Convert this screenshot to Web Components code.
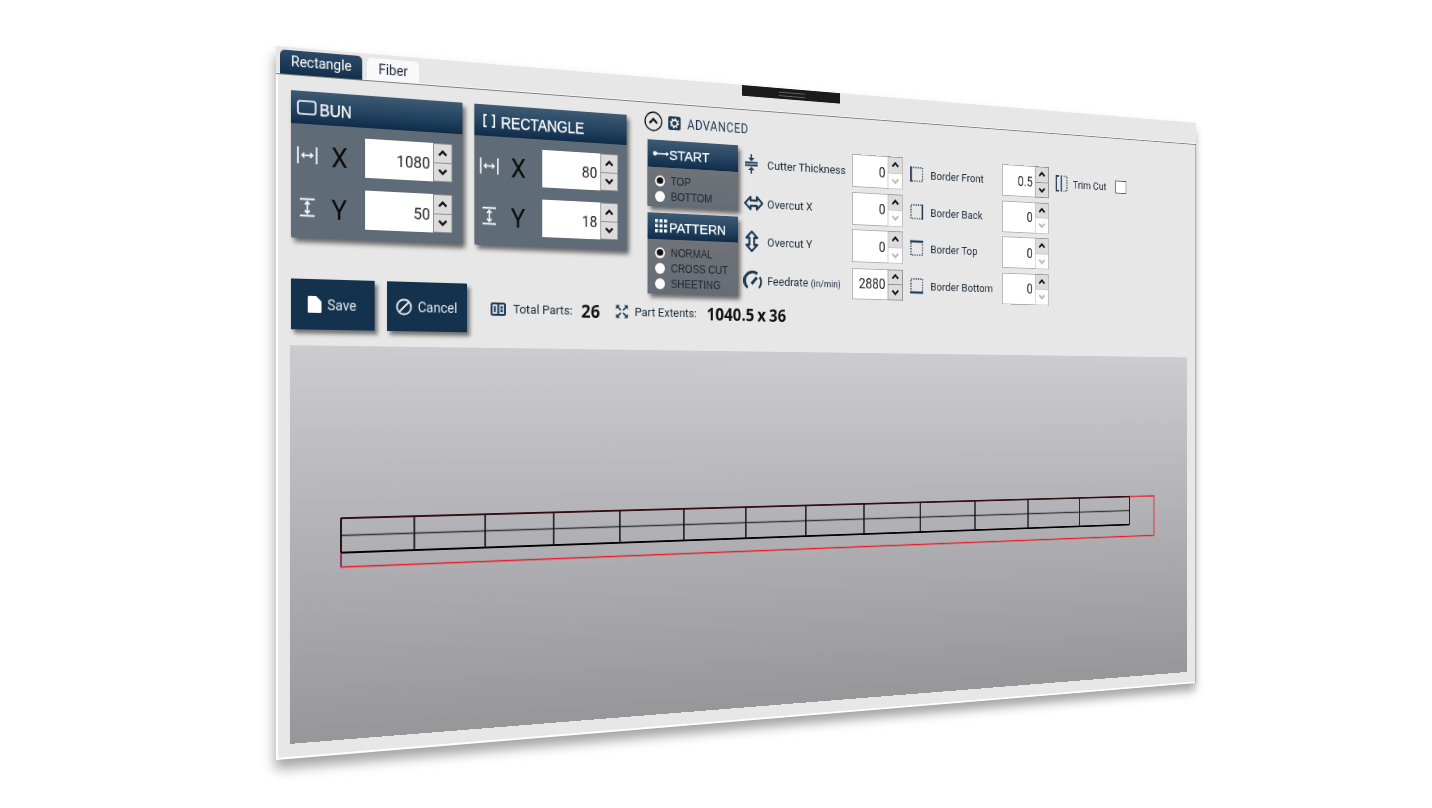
<!DOCTYPE html>
<html>
<head>
<meta charset="utf-8">
<title>Rectangle</title>
<style>
  html, body { margin: 0; height: 100%; background: #fff; overflow: hidden; }
</style>
</head>
<body>
<cut-window>
  <cut-tabs slot="tabs">
    <cut-tab active>Rectangle</cut-tab>
    <cut-tab>Fiber</cut-tab>
  </cut-tabs>

  <div slot="setup" style="display:flex">
    <cut-panel title="BUN" icon="bun" pad="6" gap="3" style="width:179.5px;height:148px;margin-right:13px">
      <dim-row icon="width" letter="X" value="1080" inw="72"></dim-row>
      <dim-row icon="height" letter="Y" value="50" inw="72"></dim-row>
    </cut-panel>
    <cut-panel title="RECTANGLE" icon="brackets" pad="9" gap="6" style="width:174.5px;height:148px">
      <dim-row icon="width" letter="X" value="80" inw="67"></dim-row>
      <dim-row icon="height" letter="Y" value="18" inw="67"></dim-row>
    </cut-panel>
  </div>

  <div slot="advanced">
    <adv-head>ADVANCED</adv-head>
    <div style="display:flex;gap:9px;margin-top:9px">
      <div style="display:flex;flex-direction:column;gap:7px;width:111px">
        <cut-panel title="START" icon="start" head="30" pad="6" gap="0" tight style="height:73px">
          <radio-row checked>TOP</radio-row>
          <radio-row>BOTTOM</radio-row>
        </cut-panel>
        <cut-panel title="PATTERN" icon="dots" head="29" pad="9" gap="2" tight style="height:89px">
          <radio-row checked>NORMAL</radio-row>
          <radio-row>CROSS CUT</radio-row>
          <radio-row>SHEETING</radio-row>
        </cut-panel>
      </div>
      <form-grid>
        <form-row icon="cutter" value="0" off>Cutter Thickness</form-row>
        <form-row icon="front" value="0.5" second>Border Front</form-row>
        <trim-cut>Trim Cut</trim-cut>

        <form-row icon="overx" value="0" off>Overcut X</form-row>
        <form-row icon="back" value="0" off second>Border Back</form-row>
        <span></span>

        <form-row icon="overy" value="0" off>Overcut Y</form-row>
        <form-row icon="top" value="0" off second>Border Top</form-row>
        <span></span>

        <form-row icon="gauge" value="2880" short>Feedrate <small>(in/min)</small></form-row>
        <form-row icon="bottom" value="0" off second>Border Bottom</form-row>
        <span></span>
      </form-grid>
    </div>
  </div>

  <div slot="actions" style="display:flex;align-items:flex-start">
    <cut-button icon="save" style="width:86px;margin-right:13px">Save</cut-button>
    <cut-button icon="cancel" style="width:86px;margin-right:26px">Cancel</cut-button>
    <cut-stat icon="parts" value="26" gap="10" style="margin-right:18px">Total Parts:</cut-stat>
    <cut-stat icon="expand" value="1040.5 x 36" gap="12">Part Extents:</cut-stat>
  </div>

  <cut-preview slot="preview"></cut-preview>
</cut-window>

<script>
const NAVY = "#1d3954";
const ICONS = {
  bun: `<svg viewBox="0 0 20 15" width="20" height="15"><rect x="1" y="1" width="18" height="13" rx="2.5" fill="none" stroke="#fff" stroke-width="1.6"/></svg>`,
  brackets: `<svg viewBox="0 0 16 16" width="15" height="16"><path d="M5 1.500H2v13h3M11 1.500h3v13h-3" fill="none" stroke="#fff" stroke-width="1.800"/></svg>`,
  width: `<svg viewBox="0 0 21 17" width="21" height="17" fill="none" stroke="#fff"><path d="M1 0v17M20 0v17" stroke-width="1.600"/><path d="M5 8.500h11M7.500 6L5 8.500 7.500 11M13.500 6L16 8.500 13.500 11" stroke-width="1.300"/></svg>`,
  height: `<svg viewBox="0 0 20 24" width="17" height="20" fill="none" stroke="#fff"><path d="M1 2h18M1 22h18" stroke-width="2"/><path d="M10 5v14M7 8.500L10 5l3 3.500M7 15.500l3 3.500 3-3.500" stroke-width="1.800"/></svg>`,
  start: `<svg viewBox="0 0 20 10" width="20" height="10"><circle cx="3" cy="5" r="2.400" fill="#fff"/><path d="M4 5h15M16.500 3.200L19 5l-2.500 1.800" fill="none" stroke="#fff" stroke-width="1.300"/></svg>`,
  dots: `<svg viewBox="0 0 15 15" width="15" height="15" fill="#fff"><path d="M0 0h3.500v3.500H0zM5.500 0H9v3.500H5.500zM11 0h3.500v3.500H11zM0 5.500h3.500V9H0zM5.500 5.500H9V9H5.500zM11 5.500h3.500V9H11zM0 11h3.500v3.500H0zM5.500 11H9v3.500H5.500zM11 11h3.500v3.500H11z"/></svg>`,
  cutter: `<svg viewBox="0 0 20 24" width="20" height="24" fill="none" stroke="${NAVY}" stroke-width="1.800"><path d="M2 10.500h16M2 13.500h16M10 1v6M10 23v-6"/><path d="M6 5l4 4 4-4zM6 19l4-4 4 4z" fill="${NAVY}" stroke="none"/></svg>`,
  overx: `<svg viewBox="0 0 26 20" width="26" height="22"><path d="M9 3L2 10l7 7v-4h8v4l7-7-7-7v4H9z" fill="none" stroke="${NAVY}" stroke-width="2.400" stroke-linejoin="round"/></svg>`,
  overy: `<svg viewBox="0 0 20 26" width="21" height="26"><path d="M3 9l7-7 7 7h-4v8h4l-7 7-7-7h4V9z" fill="none" stroke="${NAVY}" stroke-width="2.400" stroke-linejoin="round"/></svg>`,
  gauge: `<svg viewBox="0 0 22 20" width="25" height="22" fill="none" stroke="${NAVY}"><path d="M4.500 17.500A9 9 0 0 1 15.500 3.200" stroke-width="3"/><path d="M18.400 6.500A9 9 0 0 1 17.500 17.500" stroke-width="2.200"/><path d="M9 13.500L15 7" stroke-width="3"/></svg>`,
  front: side("M1 0v18"),
  back: side("M17 0v18"),
  top: side("M0 1h18"),
  bottom: side("M0 17h18"),
  trim: `<svg viewBox="0 0 20 22" width="20" height="22" fill="none" stroke="${NAVY}"><path d="M6 2H2v18h4" stroke-width="1.800"/><path d="M9.500 1v20" stroke-width="1.800"/><path d="M13 2h5v18h-5" stroke-width="1.500" stroke-dasharray="1.500 1.500"/></svg>`,
  save: `<svg viewBox="0 0 14 17" width="14" height="17"><path d="M1 0h7.500L14 5.500V16a1 1 0 0 1-1 1H1a1 1 0 0 1-1-1V1a1 1 0 0 1 1-1z" fill="#fff"/></svg>`,
  cancel: `<svg viewBox="0 0 18 18" width="18" height="18" fill="none" stroke="#e4e8ec" stroke-width="1.800"><circle cx="9" cy="9" r="7.500"/><path d="M4 14L14 4"/></svg>`,
  parts: `<svg viewBox="0 0 17 14" width="17" height="14"><rect width="17" height="14" rx="2.500" fill="${NAVY}"/><rect x="2" y="2" width="5.500" height="10" fill="#cfd5db"/><rect x="9.500" y="2" width="5.500" height="10" fill="#cfd5db"/><path d="M3.800 4h1.800v6H3.800zM11 4h2.500v2.500H11zM11 7.500h2.500V10H11z" fill="${NAVY}"/></svg>`,
  expand: `<svg viewBox="0 0 16 16" width="15" height="15" fill="${NAVY}" stroke="${NAVY}"><path d="M0.500 0.500h5L0.500 5.500zM15.500 0.500v5l-5-5zM0.500 15.500v-5l5 5zM15.500 15.500h-5l5-5z" stroke="none"/><path d="M2 2l4.500 4.500M14 2L9.500 6.500M2 14l4.500-4.500M14 14L9.500 9.500" fill="none" stroke-width="1.700"/></svg>`,
  gear: `<svg viewBox="0 0 16 16" width="15" height="15"><rect width="16" height="16" rx="2.500" fill="${NAVY}"/><circle cx="8" cy="8" r="3.700" fill="none" stroke="#fff" stroke-width="2"/><circle cx="8" cy="8" r="5.400" fill="none" stroke="#fff" stroke-width="1.500" stroke-dasharray="1.700 2.540"/></svg>`,
  up: `<svg viewBox="0 0 22 22" width="22" height="22" fill="none" stroke="#111"><circle cx="11" cy="11" r="10" stroke-width="1.400"/><path d="M6.500 13L11 8.500 15.500 13" stroke-width="2.400"/></svg>`,
};

function side(solid) {
  return `<svg viewBox="0 0 18 18" width="18" height="20" fill="none" stroke="${NAVY}"><rect x="1" y="1" width="16" height="16" stroke-width="1.600" stroke-dasharray="1.600 1.600"/><path d="${solid}" stroke-width="2.600"/></svg>`;
}

// window is laid out flat, the photo's perspective is one matrix3d on the host
class CutWindow extends HTMLElement {
  constructor() {
    super();
    this.attachShadow({ mode: "open" });
    this.shadowRoot.innerHTML = `<style>
      :host {
        position: absolute; left: 0; top: 0;
        display: block; box-sizing: border-box;
        width: 1173px; height: 714px;
        background: #e7e7e7;
        font-family: Roboto, "Liberation Sans", sans-serif;
        color: #1b2a3a;
        transform-origin: 0 0;
        transform: matrix3d(1.064705,0.094479,0,0.00023444, 0,1,0,0, 0,0,1,0, 276,46,0,1);
        box-shadow: -1px 9px 12px rgba(0,0,0,.36);
      }
      .handle {
        position: absolute; left: 523px; top: 0;
        width: 127px; height: 12px; background: #1b1b1b;
        display: flex; align-items: center; justify-content: center;
      }
      .handle i { width: 34px; height: 3px; border: 1px solid #666; border-width: 1px 0; }
      .body {
        height: 687px; box-sizing: border-box;
        border-top: 1px solid #7d7d7d; border-right: 1px solid #8c8c8c;
        box-shadow: inset -1px 0 0 #fff, inset 2px 0 0 #fff, inset 0 -2px 0 #fff, 0 -1px 0 #f5f5f5;
        padding: 15px 15px 15px 15px;
        display: flex; flex-direction: column;
      }
      .top { display: flex; height: 189px; }
      .adv { margin: -6px 0 0 25px; }
      .actions { height: 67px; }
      .preview { flex: 1; margin-left: -1px; }
    </style>
    <slot name="tabs"></slot>
    <div class="handle"><i></i></div>
    <div class="body">
      <div class="top"><slot name="setup"></slot><div class="adv"><slot name="advanced"></slot></div></div>
      <div class="actions"><slot name="actions"></slot></div>
      <div class="preview"><slot name="preview"></slot></div>
    </div>`;
  }
}

class CutTabs extends HTMLElement {
  constructor() {
    super();
    this.attachShadow({ mode: "open" });
    this.shadowRoot.innerHTML = `<style>
      :host { display: flex; height: 27px; padding-left: 4px; gap: 5px; align-items: flex-end; }
    </style><slot></slot>`;
  }
}

class CutTab extends HTMLElement {
  constructor() {
    super();
    this.attachShadow({ mode: "open" });
    this.shadowRoot.innerHTML = `<style>
      :host {
        display: flex; align-items: center; justify-content: center;
        height: 23px; width: 55px; padding-bottom: 1px; box-sizing: border-box;
        border-radius: 5px 5px 0 0;
        background: #f9f9fc; color: #1b2a3a;
        font-size: 14px;
      }
      :host([active]) {
        width: 84px; height: 24px; padding-bottom: 3px;
        background: linear-gradient(#2c4a66, #12304c);
        color: #fff;
      }
    </style><slot></slot>`;
  }
}

class CutPanel extends HTMLElement {
  constructor() {
    super();
    this.attachShadow({ mode: "open" });
  }

  connectedCallback() {
    const head = this.getAttribute("head") || "33";
    const tight = this.hasAttribute("tight");
    this.shadowRoot.innerHTML = `<style>
      :host {
        display: flex; flex-direction: column;
        background: #606b78;
        box-shadow: 3px 4px 5px rgba(0,0,0,.55);
        border-radius: 2px;
      }
      .head {
        height: ${head}px; flex: none; box-sizing: border-box;
        display: flex; align-items: center;
        gap: ${this.getAttribute("gap")}px; padding-left: ${this.getAttribute("pad")}px;
        background: linear-gradient(#3e5a74, #234360 55%, #0f2d49);
        color: #fff;
        font: ${tight ? 15.5 : 15.7}px "Liberation Sans", sans-serif;
      }
      .head svg { display: block; }
      .head span { transform: translateY(${tight ? 0.5 : 1.5}px); -webkit-text-stroke: .25px #fff; }
      .rows {
        flex: 1; display: flex; flex-direction: column;
        padding: ${tight ? "6px 0 0 9px" : "11px 0 0 0"};
        gap: ${tight ? 0 : 13}px;
        background: ${tight ? "linear-gradient(#6f7378, #646c76)" : "none"};
      }
    </style>
    <div class="head">${ICONS[this.getAttribute("icon")]}<span>${this.getAttribute("title")}</span></div>
    <div class="rows"><slot></slot></div>`;
  }
}

class DimRow extends HTMLElement {
  constructor() {
    super();
    this.attachShadow({ mode: "open" });
  }

  connectedCallback() {
    const inw = this.getAttribute("inw");
    this.shadowRoot.innerHTML = `<style>
      :host { display: grid; grid-template-columns: 6px 35px 35px auto; height: 40px; align-items: center; }
      svg { display: block; }
      .letter { font: 27px Roboto, sans-serif; color: #0c0c0c; grid-column: 3; line-height: 1; transform: translateY(1.5px); }
      .ic { grid-column: 2; display: flex; justify-content: center; width: 21px; }
    </style>
    <div class="ic">${ICONS[this.getAttribute("icon")]}</div>
    <div class="letter">${this.getAttribute("letter")}</div>
    <num-field value="${this.getAttribute("value")}" inw="${inw}" h="40" bare></num-field>`;
  }
}

class NumField extends HTMLElement {
  constructor() {
    super();
    this.attachShadow({ mode: "open" });
  }

  connectedCallback() {
    const inw = this.getAttribute("inw") || "48";
    const h = this.getAttribute("h") || "38";
    const off = this.hasAttribute("off");
    const bare = this.hasAttribute("bare");
    this.shadowRoot.innerHTML = `<style>
      :host { display: flex; height: ${h}px; }
      .val {
        width: ${inw}px; box-sizing: border-box;
        background: #fff; color: #222;
        border: 1px solid ${bare ? "#fff" : "#b0b0b0"}; border-right: 0;
        font: 16px Roboto, sans-serif;
        display: flex; align-items: center; justify-content: flex-end; padding: ${bare ? "2px" : "0"} 3px 0 0;
      }
      .spin {
        width: 21px; box-sizing: border-box;
        display: flex; flex-direction: column;
        border: 1px solid #8e8e8e; background: #dcdcdc;
      }
      .spin div { flex: 1; display: flex; align-items: center; justify-content: center; }
      .spin div + div { border-top: 1px solid #8e8e8e; }
      .spin .off { background: #fdfdfd; border-top-color: #c8c8c8; }
      .spin svg { display: block; }
      :host([off]) .spin { border-color: #999 #b8b8b8 #c8c8c8 #b8b8b8; }
    </style>
    <div class="val">${this.getAttribute("value")}</div>
    <div class="spin">
      <div><svg width="11" height="7" viewBox="0 0 11 7"><path d="M1.500 5.500l4-4 4 4" fill="none" stroke="#111" stroke-width="2.400"/></svg></div>
      <div class="${off ? "off" : ""}"><svg width="11" height="7" viewBox="0 0 11 7"><path d="M1.500 1.500l4 4 4-4" fill="none" stroke="${off ? "#b8b8b8" : "#111"}" stroke-width="2.400"/></svg></div>
    </div>`;
  }
}

class RadioRow extends HTMLElement {
  constructor() {
    super();
    this.attachShadow({ mode: "open" });
  }

  connectedCallback() {
    const checked = this.hasAttribute("checked");
    this.shadowRoot.innerHTML = `<style>
      :host {
        display: flex; align-items: center; gap: 7px; height: 17px;
        font: 12px "Liberation Sans", sans-serif; color: #23272c;
      }
      .dot {
        width: 12px; height: 12px; border-radius: 50%; background: #fbfbfb;
        display: flex; align-items: center; justify-content: center;
      }
      .dot i { width: 7.500px; height: 7.500px; border-radius: 50%; background: ${checked ? "#111" : "none"}; }
    </style><div class="dot"><i></i></div><slot></slot>`;
  }
}

class AdvHead extends HTMLElement {
  constructor() {
    super();
    this.attachShadow({ mode: "open" });
    this.shadowRoot.innerHTML = `<style>
      :host { display: flex; align-items: center; height: 22px; margin-left: -4px; font-size: 14px; color: #1d3954; }
      svg { display: block; }
      .gear { margin: 0 8px 0 7px; }
      .txt { letter-spacing: .55px; transform: translateY(1px); }
    </style>${ICONS.up}<div class="gear">${ICONS.gear}</div><span class="txt"><slot></slot></span>`;
  }
}

class FormGrid extends HTMLElement {
  constructor() {
    super();
    this.attachShadow({ mode: "open" });
    this.shadowRoot.innerHTML = `<style>
      :host { display: grid; grid-template-columns: 218px 208px auto; grid-auto-rows: 38px; row-gap: 5.5px; margin-top: 1px; }
    </style><slot></slot>`;
  }
}

class FormRow extends HTMLElement {
  constructor() {
    super();
    this.attachShadow({ mode: "open" });
  }

  connectedCallback() {
    const second = this.hasAttribute("second");
    const off = this.hasAttribute("off") ? "off" : "";
    const h = this.hasAttribute("short") ? "36" : "38";
    this.shadowRoot.innerHTML = `<style>
      :host {
        display: grid; align-items: center; font-size: 13.700px;
        grid-template-columns: ${second ? "27px 103px" : "28px 111px"} auto;
      }
      svg { display: block; }
      .ic { margin-left: ${second ? 0 : -2}px; }
      .lbl { padding-left: ${second ? 1 : 0}px; transform: translateY(-.5px); }
      ::slotted(small) { font-size: 11px; }
    </style>
    <div class="ic">${ICONS[this.getAttribute("icon")]}</div>
    <div class="lbl"><slot></slot></div>
    <num-field value="${this.getAttribute("value")}" h="${h}" ${off}></num-field>`;
  }
}

class TrimCut extends HTMLElement {
  constructor() {
    super();
    this.attachShadow({ mode: "open" });
    this.shadowRoot.innerHTML = `<style>
      :host { display: flex; align-items: center; font-size: 13.500px; }
      svg { display: block; }
      .ic { width: 27px; }
      .box { width: 17px; height: 16px; box-sizing: border-box; background: #fff; border: 1px solid #555; margin-left: 14px; }
    </style><div class="ic">${ICONS.trim}</div><slot></slot><div class="box"></div>`;
  }
}

class CutButton extends HTMLElement {
  constructor() {
    super();
    this.attachShadow({ mode: "open" });
  }

  connectedCallback() {
    this.shadowRoot.innerHTML = `<style>
      :host {
        display: flex; align-items: center; justify-content: center; gap: 6px;
        height: 51px; box-sizing: border-box; padding: 0 2px 0 0;
        background: #14324e; color: #e4e8ec;
        font-size: 14px;
        box-shadow: 3px 4px 4px rgba(0,0,0,.5);
      }
      svg { display: block; }
    </style>${ICONS[this.getAttribute("icon")]}<slot></slot>`;
  }
}

class CutStat extends HTMLElement {
  constructor() {
    super();
    this.attachShadow({ mode: "open" });
  }

  connectedCallback() {
    this.shadowRoot.innerHTML = `<style>
      :host { display: flex; align-items: center; height: 51px; font-size: 13.300px; }
      svg { display: block; }
      .ic { margin-right: 8px; }
      b { font: 700 19px "Open Sans", sans-serif; word-spacing: -1px; color: #111; margin-left: ${this.getAttribute("gap")}px; }
    </style><div class="ic">${ICONS[this.getAttribute("icon")]}</div><slot></slot><b>${this.getAttribute("value")}</b>`;
  }
}

class CutPreview extends HTMLElement {
  constructor() {
    super();
    this.attachShadow({ mode: "open" });
  }

  connectedCallback() {
    const cols = 13, cell = 77, rowH = 17.5, x0 = 52, y0 = 175;
    let lines = "";
    for (let i = 1; i < cols; i++) {
      const x = x0 + i * cell;
      lines += `<line x1="${x}" y1="${y0}" x2="${x}" y2="${y0 + 2 * rowH}" stroke="#111" stroke-width="1.700"/>`;
    }
    const right = x0 + cols * cell;
    this.shadowRoot.innerHTML = `<style>
      :host {
        display: block; width: 1144px; height: 400px;
        background: linear-gradient(#cbcbd0, #97979a);
      }
      svg { display: block; }
    </style>
    <svg width="1144" height="400" viewBox="0 0 1144 400" fill="none">
      <rect x="${x0}" y="${y0}" width="1039.500" height="49.600" stroke="#f01824" stroke-width="1.500"/>
      <line x1="${x0}" y1="${y0 + 37}" x2="${x0}" y2="${y0 + 49}" stroke="#6a2a9a" stroke-width="1.500"/>
      <line x1="${x0}" y1="${y0}" x2="${right}" y2="${y0}" stroke="#1a0508" stroke-opacity=".85" stroke-width="1.800"/>
      <line x1="${x0}" y1="${y0 + rowH}" x2="${right}" y2="${y0 + rowH}" stroke="#333" stroke-width="1.700"/>
      <line x1="${x0}" y1="${y0 + 2 * rowH}" x2="${right}" y2="${y0 + 2 * rowH}" stroke="#000" stroke-width="2"/>
      <line x1="${x0}" y1="${y0}" x2="${x0}" y2="${y0 + 2 * rowH}" stroke="#111" stroke-width="1.800"/>
      <line x1="${right}" y1="${y0}" x2="${right}" y2="${y0 + 2 * rowH}" stroke="#111" stroke-width="1.800"/>
      ${lines}
    </svg>`;
  }
}

customElements.define("cut-window", CutWindow);
customElements.define("cut-tabs", CutTabs);
customElements.define("cut-tab", CutTab);
customElements.define("cut-panel", CutPanel);
customElements.define("dim-row", DimRow);
customElements.define("num-field", NumField);
customElements.define("radio-row", RadioRow);
customElements.define("adv-head", AdvHead);
customElements.define("form-grid", FormGrid);
customElements.define("form-row", FormRow);
customElements.define("trim-cut", TrimCut);
customElements.define("cut-button", CutButton);
customElements.define("cut-stat", CutStat);
customElements.define("cut-preview", CutPreview);
</script>
</body>
</html>
